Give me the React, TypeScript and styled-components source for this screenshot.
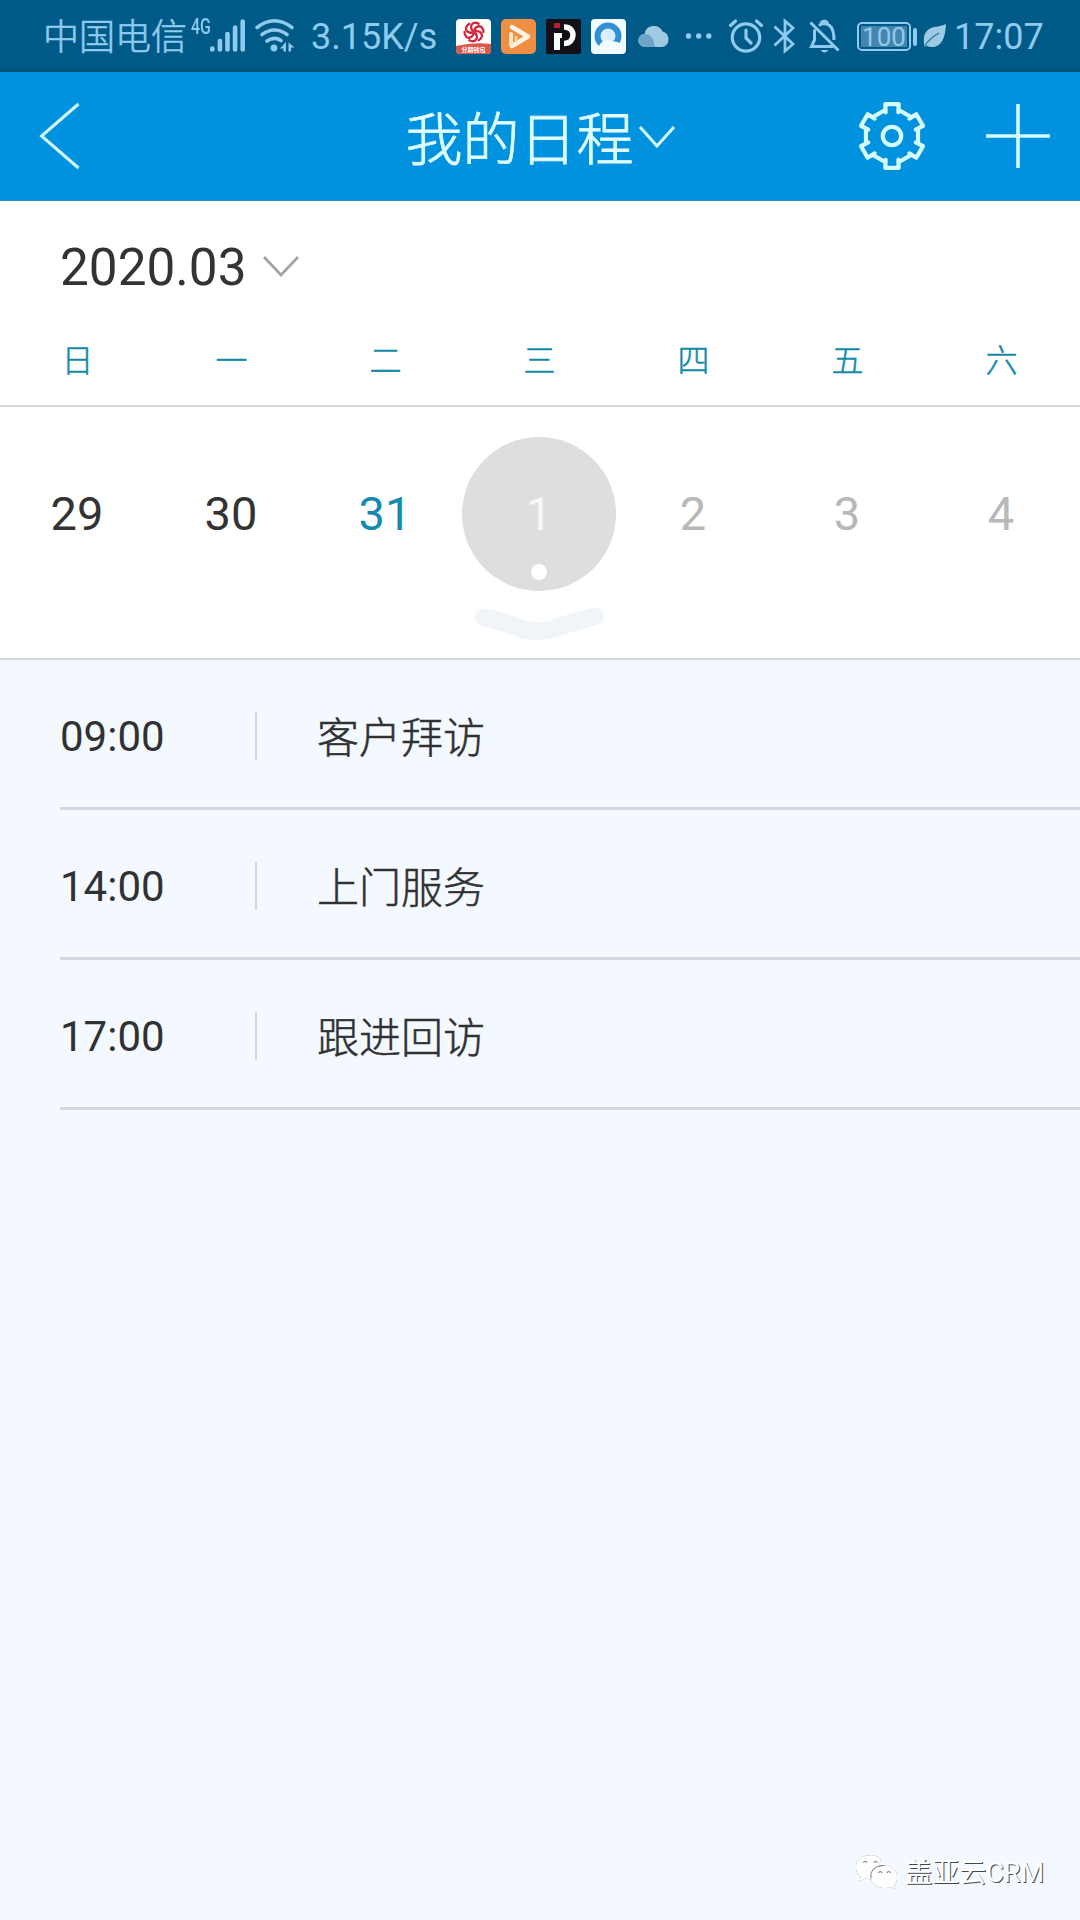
import React from "react";
import styled, { createGlobalStyle } from "styled-components";

const GlobalStyle = createGlobalStyle`
  * { box-sizing: border-box; }
  html, body { margin: 0; padding: 0; background: #f4f9ff; }
  body { font-family: Roboto, "Noto Sans CJK SC", sans-serif; }
`;

const STATUS = "#8fcbee";
const ICE = "#d6fbff";

const Screen = styled.div`
  width: 1080px;
  height: 1920px;
  display: flex;
  flex-direction: column;
  background: #f4f9ff;
  overflow: hidden;
`;

const StatusBar = styled.div`
  height: 72px;
  flex: none;
  display: flex;
  align-items: flex-start;
  padding: 18px 0 0 43px;
  color: ${STATUS};
  background: linear-gradient(#005a88 0, #005a88 64px, #00527a 70px, #00557c 72px);
`;

const StatusText = styled.span<{ $w: number; $ml?: number; $light?: boolean }>`
  flex: none;
  width: ${(p) => p.$w}px;
  margin-left: ${(p) => p.$ml ?? 0}px;
  font-size: 36px;
  font-weight: ${(p) => (p.$light ? 300 : 400)};
  -webkit-text-stroke: ${(p) => (p.$light ? "0.6px currentColor" : "0")};
  line-height: ${(p) => (p.$light ? 40 : 39)}px;
  white-space: nowrap;
`;

const NetworkType = styled.span`
  flex: none;
  width: 19px;
  margin-left: 4px;
  font-size: 22px;
  line-height: 18px;
  font-weight: 500;
  transform: scaleX(0.72);
  transform-origin: left;
`;

const StatusIcon = styled.svg<{ $ml?: number }>`
  flex: none;
  display: block;
  height: 36px;
  margin-left: ${(p) => p.$ml ?? 0}px;
  overflow: visible;
`;

const Battery = styled.div`
  flex: none;
  display: flex;
  align-items: center;
  margin: 4px 0 0 18px;
`;

const BatteryCell = styled.div`
  width: 54px;
  height: 29px;
  padding: 2px;
  border: 2px solid ${STATUS};
  border-radius: 5px;
`;

const BatteryFill = styled.div`
  height: 21px;
  background: #4685ab;
  font-size: 26px;
  line-height: 22px;
  text-align: center;
`;

const BatteryTip = styled.div`
  width: 4px;
  height: 18px;
  margin-left: 2px;
  border-radius: 2px;
  background: ${STATUS};
`;

const Header = styled.header`
  height: 129px;
  flex: none;
  display: grid;
  grid-template-columns: 1fr auto 1fr;
  align-items: center;
  background: #0092de;
  border-bottom: 1px solid #2a8cb5;
`;

const HeaderLeft = styled.div`
  padding-left: 39px;
`;

const HeaderRight = styled.div`
  display: flex;
  align-items: center;
  justify-content: flex-end;
  gap: 60px;
  padding-right: 30px;
`;

const TitleGroup = styled.div`
  display: flex;
  align-items: center;
  gap: 5px;
`;

const Title = styled.h1`
  margin: 0;
  padding-top: 9px;
  font-size: 57px;
  font-weight: 300;
  -webkit-text-stroke: 0.8px currentColor;
  line-height: 80px;
  color: #dffcff;
`;

const Icon = styled.svg`
  display: block;
  flex: none;
  fill: none;
  overflow: visible;
`;

const Calendar = styled.section`
  height: 459px;
  flex: none;
  display: flex;
  flex-direction: column;
  background: #fff;
  border-bottom: 2px solid #d3d7d8;
`;

const MonthPicker = styled.div`
  height: 131px;
  display: flex;
  align-items: center;
  gap: 16px;
  padding: 1px 0 0 60px;
  font-size: 51.3px;
  color: #333;
`;

const WeekGrid = styled.div`
  display: grid;
  grid-template-columns: repeat(7, 154px);
  width: 1080px;
`;

const WeekNames = styled(WeekGrid)`
  height: 75px;
  border-bottom: 2px solid #d9d9d9;
`;

const WeekName = styled.span`
  padding-left: 1px;
  font-size: 32px;
  font-weight: 300;
  -webkit-text-stroke: 0.5px currentColor;
  line-height: 58px;
  text-align: center;
  color: #1389a8;
`;

const Days = styled(WeekGrid)`
  margin-top: 30px;
`;

type Tone = "normal" | "today" | "muted" | "selected";
const toneColor: Record<Tone, string> = {
  normal: "#333",
  today: "#1489b3",
  muted: "#b8b8b8",
  selected: "#f7f7f7",
};

const Day = styled.div<{ $tone: Tone }>`
  position: relative;
  width: 154px;
  height: 154px;
  border-radius: 50%;
  background: ${(p) => (p.$tone === "selected" ? "#dedede" : "transparent")};
  font-size: 47px;
  line-height: 154px;
  text-align: center;
  color: ${(p) => toneColor[p.$tone]};
`;

const EventDot = styled.i`
  position: absolute;
  left: 69px;
  top: 127px;
  width: 16px;
  height: 16px;
  border-radius: 50%;
  background: #fff;
`;

const Expander = styled.div`
  display: flex;
  justify-content: center;
  margin-top: 15px;
`;

const Agenda = styled.ul`
  flex: 1;
  margin: 0;
  padding: 0 0 0 60px;
  list-style: none;
`;

const AgendaRow = styled.li`
  display: flex;
  align-items: center;
  height: 150px;
  padding-top: 4px;
  border-bottom: 3px solid #d3d8dd;
  font-size: 42px;
  color: #2f3133;
`;

const Time = styled.time`
  width: 195px;
  padding-top: 2px;
`;

const Divider = styled.span`
  width: 2px;
  height: 48px;
  background: #d4d9dd;
`;

const Subject = styled.span`
  padding: 0 0 3px 60px;
  font-weight: 300;
  -webkit-text-stroke: 0.5px currentColor;
`;

const Watermark = styled.footer`
  display: flex;
  align-items: center;
  justify-content: flex-end;
  gap: 7px;
  height: 97px;
  padding: 0 36px 0 0;
  font-size: 27px;
  line-height: 40px;
  color: #fff;
  text-shadow: 1px 1px 0.5px #45484c;
`;

const WatermarkName = styled.span`
  padding-top: 2px;
`;

const WechatIcon = styled.svg`
  filter: drop-shadow(0.3px 0.6px 0.4px #66696d);
  overflow: visible;
`;

const Signal = () => (
  <StatusIcon width="36" viewBox="210 18 36 36" stroke={STATUS} strokeWidth="4.6" strokeLinecap="round">
    <path d="M212.3 48.5v1M219.9 41v8.5M227.5 34v15.5M235.1 27.5v22M242.7 21.5v28" />
  </StatusIcon>
);

const Wifi = () => (
  <StatusIcon $ml={9} width="40" viewBox="255 18 40 36" fill="none" stroke={STATUS} strokeWidth="3.6" strokeLinecap="round">
    <path d="M257 27.5Q274.500 14 292 27.500M262 34.500Q274.500 25.500 287 34.500M267 41Q274.500 36 281 40.500" />
    <circle cx="274" cy="48" r="3.400" fill={STATUS} stroke="none" />
    <path d="M286 42v9.500h-2.500V48.500h-3.500zM288.500 51.500V42.500l6 5h-3.500v4z" fill={STATUS} stroke="none" />
  </StatusIcon>
);

const gearPath = (() => {
  const points: string[] = [];
  for (let i = 0; i < 6; i++) {
    const base = i * 60;
    const polar: [number, number][] = [
      [24.6, -15],
      [32.6, -11.8],
      [32.6, 11.8],
      [24.6, 15],
      [26.6, 18],
      [26.6, 42],
    ];
    polar.forEach(([r, a]) => {
      const t = ((base + a - 90) * Math.PI) / 180;
      points.push(`${(34 + r * Math.cos(t)).toFixed(2)} ${(34 + r * Math.sin(t)).toFixed(2)}`);
    });
  }
  return `M${points.join("L")}Z`;
})();

const week = ["日", "一", "二", "三", "四", "五", "六"];
const days: { n: number; tone: Tone }[] = [
  { n: 29, tone: "normal" },
  { n: 30, tone: "normal" },
  { n: 31, tone: "today" },
  { n: 1, tone: "selected" },
  { n: 2, tone: "muted" },
  { n: 3, tone: "muted" },
  { n: 4, tone: "muted" },
];
const agenda = [
  ["09:00", "客户拜访"],
  ["14:00", "上门服务"],
  ["17:00", "跟进回访"],
];

export default function App() {
  return (
    <Screen>
      <GlobalStyle />
      <StatusBar>
        <StatusText $w={144} $light>中国电信</StatusText>
        <NetworkType>4G</NetworkType>
        <Signal />
        <Wifi />
        <StatusText $w={127} $ml={16}>3.15K/s</StatusText>
        <StatusIcon $ml={18} width="35" viewBox="0 0 35 36">
          <rect y="1" width="35" height="35" rx="4" fill="#fff" />
          <path d="M0 28Q17 24 35 26v6a4 4 0 0 1-4 4H4a4 4 0 0 1-4-4z" fill="#dc5748" />
          <g fill="none" stroke="#d3263f" strokeWidth="2.3" strokeLinecap="round">
            {[0, 60, 120, 180, 240, 300].map((a) => (
              <path key={a} d="M18 12.500Q21 6.500 25.500 9Q27.500 11 27.500 14" transform={`rotate(${a} 18 14)`} />
            ))}
          </g>
          <text x="17.500" y="34" fontSize="6" fill="#fff" textAnchor="middle" fontWeight="700">分期钱包</text>
        </StatusIcon>
        <StatusIcon $ml={10} width="35" viewBox="0 0 35 36">
          <rect y="1" width="35" height="35" rx="5" fill="#ee8f44" />
          <path d="M11 9L27 18.500L11 28" fill="none" stroke="#fff5e6" strokeWidth="4.500" strokeLinecap="round" strokeLinejoin="round" />
          <path d="M10 16v11" stroke="#ffe6c6" strokeWidth="4" strokeLinecap="round" />
          <path d="M15 19v4" stroke="#ffd09a" strokeWidth="3" strokeLinecap="round" />
        </StatusIcon>
        <StatusIcon $ml={10} width="35" viewBox="0 0 35 36">
          <rect y="1" width="35" height="35" rx="2" fill="#120f16" />
          <path d="M8 5h6v5H8z" fill="#b5202f" />
          <path d="M8 15h8v5h-2v12H8z" fill="#fff" />
          <path d="M18 9C30 8.500 30 25.500 18 25.500" fill="none" stroke="#fff" strokeWidth="5.500" />
        </StatusIcon>
        <StatusIcon $ml={10} width="35" viewBox="0 0 35 36">
          <rect y="1" width="35" height="35" rx="4" fill="#f2fbff" />
          <circle cx="17" cy="18" r="10.500" fill="#d9f0fb" stroke="#2f8fd6" strokeWidth="6" />
          <path d="M10 33a5 5 0 0 1 0-8a7 7 0 0 1 11-1c6-2 11 3 12 9z" fill="#f2fbff" />
        </StatusIcon>
        <StatusIcon $ml={12} width="32" viewBox="638 18 32 36">
          <path d="M645 47a6.500 6.500 0 0 1-.500-13a9.500 9.500 0 0 1 18-2.500a8 8 0 0 1 0 15.500z" fill="#9fcbe2" />
          <path d="M645 47a6.500 6.500 0 0 1 0-13q8 0 10 13z" fill="#6fa5c4" />
        </StatusIcon>
        <StatusIcon $ml={15} width="27" viewBox="685 18 27 36" fill={STATUS}>
          <circle cx="688.500" cy="36" r="2.700" />
          <circle cx="698.700" cy="36" r="2.700" />
          <circle cx="708.800" cy="36" r="2.700" />
        </StatusIcon>
        <StatusIcon $ml={17} width="34" viewBox="730 18 34 36" fill="none" stroke={STATUS} strokeWidth="3.200" strokeLinecap="round">
          <circle cx="747" cy="37.500" r="13.700" />
          <path d="M747 30v8l5 5M731.500 25.500l5-4.500M757.500 21l5 4.500" />
        </StatusIcon>
        <StatusIcon $ml={10} width="22" viewBox="774 18 22 36" fill="none" stroke={STATUS} strokeWidth="2.800" strokeLinejoin="miter">
          <path d="M775.500 26.500L794 44L786 51V21L794 28L775.500 45.500" />
        </StatusIcon>
        <StatusIcon $ml={13} width="31" viewBox="808 18 31 36" fill="none" stroke={STATUS} strokeWidth="3">
          <path d="M810.500 22.500L838.500 50.500M819 25.500Q824 22 829.500 25.500Q834 29 834 40M814.500 29.500V40L811.500 46.500H833M820.500 23.500Q824.500 18.500 828 23.500" />
          <path d="M820.500 50h8q-4 5-8 0z" fill={STATUS} stroke="none" />
        </StatusIcon>
        <Battery>
          <BatteryCell>
            <BatteryFill>100</BatteryFill>
          </BatteryCell>
          <BatteryTip />
        </Battery>
        <StatusIcon $ml={7} width="22" viewBox="925 18 22 36">
          <path d="M947 24Q946 47 933 47Q929.500 47 927.500 45.500L925.500 47Q922 30 935 27Q943 26 947 24z" fill="#9ccbe3" />
          <path d="M925.500 46Q931 38 940 33" fill="none" stroke="#2e749a" strokeWidth="1.300" />
        </StatusIcon>
        <StatusText $w={90} $ml={8}>17:07</StatusText>
      </StatusBar>

      <Header>
        <HeaderLeft>
          <Icon width="42" height="66" viewBox="0 0 42 66" stroke={ICE} strokeWidth="3">
            <path d="M39.500 1L2.500 33L39.500 65" />
          </Icon>
        </HeaderLeft>
        <TitleGroup>
          <Title>我的日程</Title>
          <Icon width="36" height="24" viewBox="0 0 36 24" stroke={ICE} strokeWidth="3">
            <path d="M1 3L18 22L35 3" />
          </Icon>
        </TitleGroup>
        <HeaderRight>
          <Icon width="68" height="68" viewBox="0 0 68 68" stroke={ICE} strokeWidth="4.200" strokeLinejoin="round">
            <path d={gearPath} />
            <circle cx="34" cy="34" r="9.200" />
          </Icon>
          <Icon width="64" height="64" viewBox="0 0 64 64" stroke={ICE} strokeWidth="3.600">
            <path d="M0 32H64M32 0V64" />
          </Icon>
        </HeaderRight>
      </Header>

      <Calendar>
        <MonthPicker>
          <span>2020.03</span>
          <Icon width="36" height="22" viewBox="0 0 36 22" stroke="#a3a3a3" strokeWidth="2.600">
            <path d="M1 1L18 19L35 1" />
          </Icon>
        </MonthPicker>
        <WeekNames>
          {week.map((w) => (
            <WeekName key={w}>{w}</WeekName>
          ))}
        </WeekNames>
        <Days>
          {days.map((d) => (
            <Day key={d.n} $tone={d.tone}>
              {d.n}
              {d.tone === "selected" && <EventDot />}
            </Day>
          ))}
        </Days>
        <Expander>
          <Icon width="130" height="38" viewBox="0 0 130 38" stroke="#f1f5f9" strokeWidth="18" strokeLinecap="round" strokeLinejoin="round">
            <path d="M9 11.500Q24 14 44 22Q64 29 84 21Q104 14 120 10.500" />
          </Icon>
        </Expander>
      </Calendar>

      <Agenda>
        {agenda.map(([time, subject]) => (
          <AgendaRow key={time}>
            <Time>{time}</Time>
            <Divider />
            <Subject>{subject}</Subject>
          </AgendaRow>
        ))}
      </Agenda>

      <Watermark>
        <WechatIcon width="43" height="38" viewBox="0 0 46 40">
          <path d="M16 2C6 2 1 8 1 15c0 5 2 8 5 10l-1 5 6-3c3 1 6 1 9 0l8-20C25 3 21 2 16 2z" fill="#fff" />
          <path d="M31 13c-8 0-14 5-14 12s6 12 14 12c3 0 5 0 7-1l5 2-1-4c2-2 3-5 3-9 0-7-6-12-14-12z" fill="#fff" />
          <path d="M17 27Q15 14 31 13" fill="none" stroke="#777" strokeWidth="1" />
          <g fill="none" stroke="#777" strokeWidth="1.200">
            <path d="M9 10q2-3 4 0M20 10q2-3 4 0M25 21q2-3 4 0M34 21q2-3 4 0" />
          </g>
        </WechatIcon>
        <WatermarkName>盖亚云CRM</WatermarkName>
      </Watermark>
    </Screen>
  );
}
